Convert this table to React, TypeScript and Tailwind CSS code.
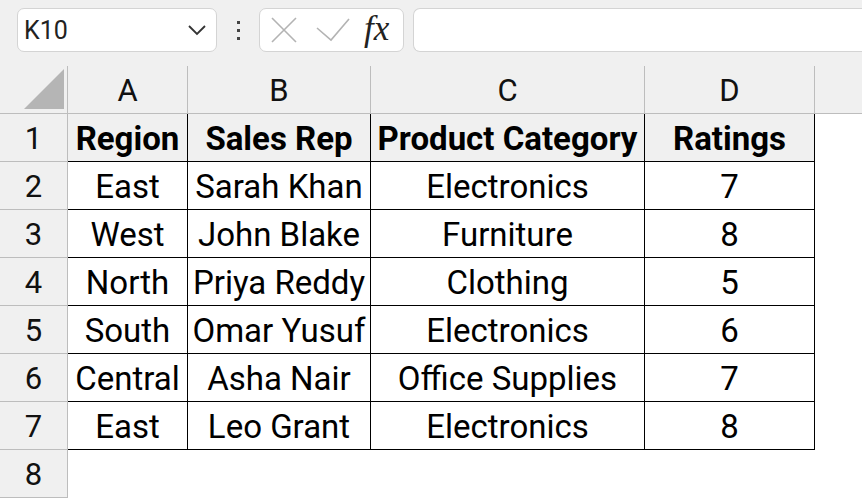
import React from "react";

const cols = ["A", "B", "C", "D"];
const widths = "grid-cols-[68px_120px_183px_274px_170px_1fr]";

const data: string[][] = [
  ["Region", "Sales Rep", "Product Category", "Ratings"],
  ["East", "Sarah Khan", "Electronics", "7"],
  ["West", "John Blake", "Furniture", "8"],
  ["North", "Priya Reddy", "Clothing", "5"],
  ["South", "Omar Yusuf", "Electronics", "6"],
  ["Central", "Asha Nair", "Office Supplies", "7"],
  ["East", "Leo Grant", "Electronics", "8"],
];

const font = { fontFamily: "Roboto, 'Noto Sans', sans-serif" };

function Cell({ children, className }: { children?: React.ReactNode; className: string }) {
  return (
    <div className={`h-[48px] flex items-center justify-center overflow-hidden whitespace-nowrap pt-[3px] ${className}`}>
      {children}
    </div>
  );
}

export default function App() {
  return (
    <div className="w-[862px] h-[498px] overflow-hidden bg-white text-black" style={font}>
      {/* formula bar */}
      <div className="h-[66px] bg-[#f0f0f0] flex items-start pt-[8px]">
        <div className="ml-[17px] w-[200px] h-[44px] bg-white border border-[#d4d4d4] rounded-[7px] flex items-center justify-between pl-[6px] pr-[9px]">
          <span className="text-[25px] text-[#222] leading-none">K10</span>
          <svg width="20" height="12" viewBox="0 0 20 12">
            <path d="M2 2 L10 10 L18 2" fill="none" stroke="#333" strokeWidth="1.8" />
          </svg>
        </div>
        <div className="w-[42px] h-[44px] flex flex-col items-center justify-center gap-[5px]">
          <div className="w-[3px] h-[3px] bg-[#444]" />
          <div className="w-[3px] h-[3px] bg-[#444]" />
          <div className="w-[3px] h-[3px] bg-[#444]" />
        </div>
        <div className="w-[145px] h-[44px] bg-white border border-[#d4d4d4] rounded-[7px] flex items-center pl-[10px]">
          <svg width="28" height="26" viewBox="0 0 28 26">
            <path d="M2 1 L26 25 M26 1 L2 25" stroke="#b3b3b3" strokeWidth="1.6" fill="none" />
          </svg>
          <svg width="34" height="26" viewBox="0 0 34 26" className="ml-[18px]">
            <path d="M1 11 L15 23 L33 2" stroke="#b3b3b3" strokeWidth="1.6" fill="none" />
          </svg>
          <span
            className="ml-[14px] text-[35px] italic text-[#222] leading-none pb-[4px]"
            style={{ fontFamily: "'Liberation Serif', serif" }}
          >
            fx
          </span>
        </div>
        <div className="ml-[9px] flex-1 h-[44px] bg-white border border-[#d4d4d4] border-r-0 rounded-l-[7px]" />
      </div>

      {/* grid */}
      <div className={`grid ${widths}`}>
        {/* column header row */}
        <Cell className="bg-[#f0f0f0] border-r border-b border-[#bdbdbd] relative">
          <svg width="40" height="40" viewBox="0 0 40 40" className="absolute right-[3px] bottom-[4px]">
            <polygon points="40,0 40,40 0,40" fill="#b5b5b5" />
          </svg>
        </Cell>
        {cols.map((c) => (
          <Cell key={c} className="bg-[#f0f0f0] border-r border-b border-[#bdbdbd] text-[31px] text-[#111]">
            {c}
          </Cell>
        ))}
        <Cell className="bg-[#f0f0f0] border-b border-[#bdbdbd]" />

        {data.map((row, r) => (
          <React.Fragment key={r}>
            <Cell className="bg-[#f0f0f0] border-r border-b border-[#bdbdbd] text-[31px] text-[#111]">
              {r + 1}
            </Cell>
            {row.map((v, i) => (
              <Cell
                key={i}
                className={`border-r border-b border-black text-[33px] ${
                  r === 0 ? "bg-[#f0f0f0] font-bold" : "bg-white"
                }`}
              >
                {v}
              </Cell>
            ))}
            <Cell className="bg-white" />
          </React.Fragment>
        ))}

        <Cell className="bg-[#f0f0f0] border-r border-b border-[#bdbdbd] text-[31px] text-[#111]">8</Cell>
        <Cell className="bg-white col-span-5" />
      </div>
    </div>
  );
}
